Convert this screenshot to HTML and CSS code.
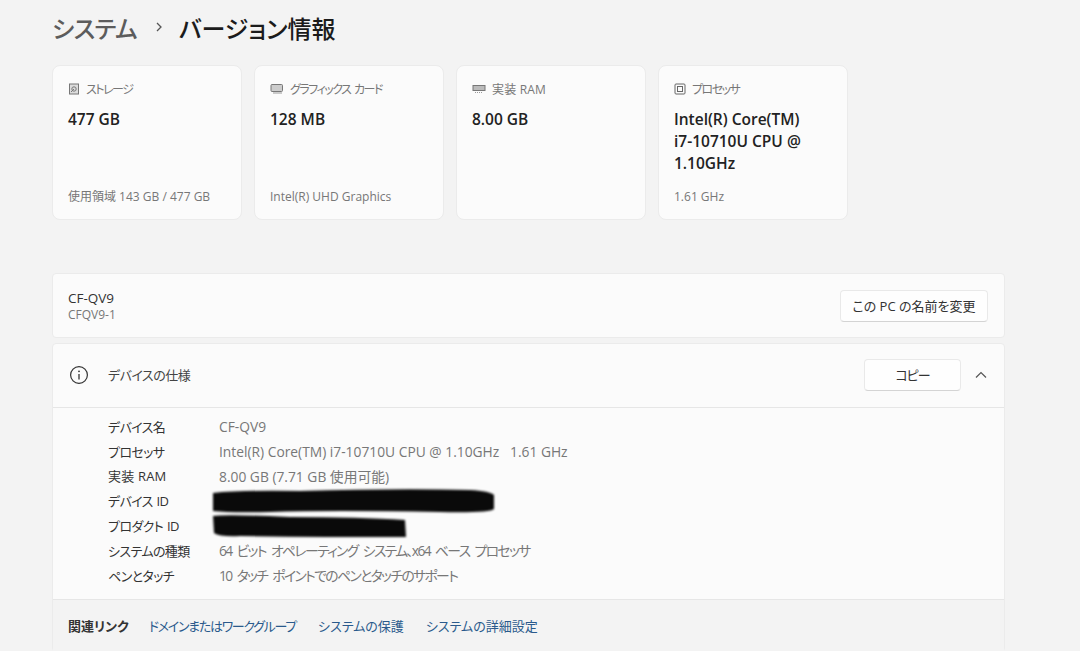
FILE: index.html
```html
<!DOCTYPE html>
<html lang="ja">
<head>
  <meta charset="UTF-8" />
  <title>バージョン情報</title>
  <link rel="stylesheet" href="styles.css">
</head>
<body>

  <div class="page">
    <h1 class="title">
      <span class="crumb">システム</span>
      <svg class="crumb-sep" width="10" height="12" viewBox="0 0 10 12"><path d="M3 2l4 4-4 4" fill="none" stroke="#555" stroke-width="1.3"/></svg>
      <span>バージョン情報</span>
    </h1>

    <div class="tiles">
      <div class="tile">
        <div class="tile-head">
          <svg width="12" height="12" viewBox="0 0 12 12"><rect x="1.5" y="1" width="9" height="10" fill="#ddd" stroke="#777"/><circle cx="6" cy="6" r="2.2" fill="none" stroke="#777"/><path d="M6 6l-3 3" stroke="#777"/></svg>
          <span>ストレージ</span>
        </div>
        <div class="tile-value">477 GB</div>
        <div class="tile-sub">使用領域 143 GB / 477 GB</div>
      </div>
      <div class="tile">
        <div class="tile-head">
          <svg width="14" height="12" viewBox="0 0 14 12"><rect x="1" y="1.5" width="11.5" height="7" rx="1" fill="#ccc" stroke="#777"/><path d="M3 10h9" stroke="#999"/></svg>
          <span>グラフィックス カード</span>
        </div>
        <div class="tile-value">128 MB</div>
        <div class="tile-sub">Intel(R) UHD Graphics</div>
      </div>
      <div class="tile">
        <div class="tile-head">
          <svg width="14" height="12" viewBox="0 0 14 12"><rect x="1" y="2.5" width="12" height="5" fill="#bbb" stroke="#777"/><path d="M3 9.5h8" stroke="#999" stroke-dasharray="1 1"/></svg>
          <span class="latin">実装 RAM</span>
        </div>
        <div class="tile-value">8.00 GB</div>
      </div>
      <div class="tile">
        <div class="tile-head">
          <svg width="12" height="12" viewBox="0 0 12 12"><rect x="1" y="1" width="10" height="10" rx="1" fill="none" stroke="#666"/><rect x="3.5" y="3.5" width="5" height="5" fill="none" stroke="#666"/></svg>
          <span>プロセッサ</span>
        </div>
        <div class="tile-value">Intel(R) Core(TM) i7-10710U CPU @ 1.10GHz</div>
        <div class="tile-sub">1.61 GHz</div>
      </div>
    </div>

    <div class="panel rename">
      <div>
        <div class="pc-name">CF-QV9</div>
        <div class="pc-model">CFQV9-1</div>
      </div>
      <button class="btn btn-rename">この PC の名前を変更</button>
    </div>

    <div class="panel specs">
      <div class="specs-head">
        <svg class="info" width="20" height="20" viewBox="0 0 20 20"><circle cx="10" cy="10" r="8.4" fill="none" stroke="#333" stroke-width="1.2"/><path d="M10 9v5.5" stroke="#333" stroke-width="1.3"/><circle cx="10" cy="6.3" r="0.9" fill="#333"/></svg>
        <span class="specs-title">デバイスの仕様</span>
        <button class="btn btn-copy">コピー</button>
        <svg class="chevron" width="14" height="10" viewBox="0 0 14 10"><path d="M2 7.5l5-5 5 5" fill="none" stroke="#555" stroke-width="1.2"/></svg>
      </div>
      <div class="specs-body">
        <div class="spec-row"><span class="spec-key">デバイス名</span><span class="spec-val">CF-QV9</span></div>
        <div class="spec-row"><span class="spec-key">プロセッサ</span><span class="spec-val">Intel(R) Core(TM) i7-10710U CPU @ 1.10GHz&nbsp;&nbsp; 1.61 GHz</span></div>
        <div class="spec-row"><span class="spec-key latin">実装 RAM</span><span class="spec-val">8.00 GB (7.71 GB 使用可能)</span></div>
        <div class="spec-row"><span class="spec-key">デバイス ID</span></div>
        <div class="spec-row"><span class="spec-key">プロダクト ID</span></div>
        <div class="spec-row"><span class="spec-key">システムの種類</span><span class="spec-val kana">64 ビット オペレーティング システム、x64 ベース プロセッサ</span></div>
        <div class="spec-row"><span class="spec-key">ペンとタッチ</span><span class="spec-val kana">10 タッチ ポイントでのペンとタッチのサポート</span></div>
      </div>
      <div class="links">
        <span class="links-label">関連リンク</span>
        <a href="#" class="kana">ドメインまたはワークグループ</a>
        <a href="#">システムの保護</a>
        <a href="#">システムの詳細設定</a>
      </div>
    </div>
  </div>

  <!-- blacked out ids, drawn over the rows -->
  <svg class="scribble" width="1080" height="651" viewBox="0 0 1080 651">
    <path d="M213 493 Q240 490 300 491 Q400 488 470 490 Q490 491 494 495 L494 509 Q490 513 440 512 Q330 510 270 512 Q230 513 213 511 Z" fill="#0a0a0a"/>
    <path d="M213 516 Q225 514 290 517 Q360 517 405 520 L406 537 Q320 537 240 536 Q220 537 214 533 Z" fill="#0a0a0a"/>
  </svg>

</body>
</html>
```

FILE: styles.css
```css
* {
  box-sizing: border-box;
}

body {
  margin: 0;
  height: 651px;
  overflow: hidden;
  background: #f3f3f3;
  color: #1b1b1b;
  font-family: 'Open Sans', 'Noto Sans CJK JP', sans-serif;
  font-feature-settings: "palt";
}

.page {
  padding: 6px 75px 0 52px;
}

.title {
  display: flex;
  align-items: center;
  margin: 0;
  height: 42px;
  font-size: 24px;
  font-weight: 500;
  font-family: 'Noto Sans CJK JP', sans-serif;
}

.crumb {
  color: #5c5c5c;
  letter-spacing: -0.6px;
}

.crumb-sep {
  margin: 0 15px 0 17px;
}

.tiles {
  display: flex;
  gap: 12px;
  margin-top: 17px;
}

.tile {
  display: flex;
  flex-direction: column;
  width: 190px;
  height: 155px;
  padding: 14px 15px 13px;
  background: #fbfbfb;
  border: 1px solid #ebebeb;
  border-radius: 8px;
}

.tile-head {
  display: flex;
  align-items: center;
  gap: 6px;
  height: 18px;
  font-size: 12px;
  color: #777;
  letter-spacing: -1.5px;
  word-spacing: 2px;
}

.tile-value {
  max-width: 140px;
  margin-top: 10px;
  font-size: 15.5px;
  line-height: 22px;
  font-weight: 600;
  color: #222;
}

.tile-sub {
  margin-top: auto;
  font-size: 12px;
  line-height: 18px;
  color: #777;
}

.panel {
  background: #fbfbfb;
  border: 1px solid #ebebeb;
  border-radius: 4px;
}

.rename {
  display: flex;
  align-items: center;
  justify-content: space-between;
  height: 65px;
  margin-top: 53px;
  padding: 0 16px 0 15px;
}

.pc-name {
  font-size: 13.5px;
  line-height: 17px;
  color: #333;
}

.pc-model {
  font-size: 12px;
  line-height: 15px;
  color: #777;
}

.btn {
  height: 32px;
  background: #fefefe;
  border: 1px solid #e9e9e9;
  border-bottom-color: #d4d4d4;
  border-radius: 4px;
  color: #333;
  font-size: 13px;
  font-family: 'Open Sans', 'Noto Sans CJK JP', sans-serif;
  font-feature-settings: "palt";
}

.btn-rename {
  width: 148px;
}

.specs {
  margin-top: 5px;
}

.specs-head {
  display: flex;
  align-items: center;
  height: 64px;
  padding: 0 16px 2px 15px;
  border-bottom: 1px solid #e6e6e6;
}

.info {
  margin-left: 1px;
}

.specs-title {
  margin-left: 19px;
  font-size: 13px;
  color: #444;
  letter-spacing: -0.5px;
}

.btn-copy {
  width: 97px;
  margin-left: auto;
  letter-spacing: -1px;
}

.chevron {
  margin-left: 13px;
}

.specs-body {
  padding: 6px 0 11px 55px;
}

.spec-row {
  display: flex;
  height: 24.8px;
  align-items: center;
  font-size: 13.8px;
}

.spec-key {
  width: 111px;
  font-size: 13px;
  letter-spacing: -0.6px;
  word-spacing: 1px;
  color: #333;
}

.spec-val {
  color: #777;
}

.links {
  display: flex;
  align-items: center;
  height: 52px;
  padding-left: 15px;
  background: #f3f3f3;
  border-top: 1px solid #e6e6e6;
  font-size: 13px;
}

.links-label {
  margin-right: 20px;
  font-weight: 700;
  color: #333;
}

.links a {
  margin-right: 22px;
  color: #2a5a8c;
  text-decoration: none;
}

/* labels that hold latin capitals keep normal spacing */
.tile-head .latin,
.spec-key.latin {
  letter-spacing: 0.2px;
  word-spacing: 0;
}

/* long katakana runs set tighter, like the system font */
.spec-val.kana {
  letter-spacing: -1.6px;
  word-spacing: 3px;
}

.links a.kana {
  letter-spacing: -1.3px;
}

.scribble {
  position: absolute;
  top: 0;
  left: 0;
  filter: blur(0.8px);
}
```
